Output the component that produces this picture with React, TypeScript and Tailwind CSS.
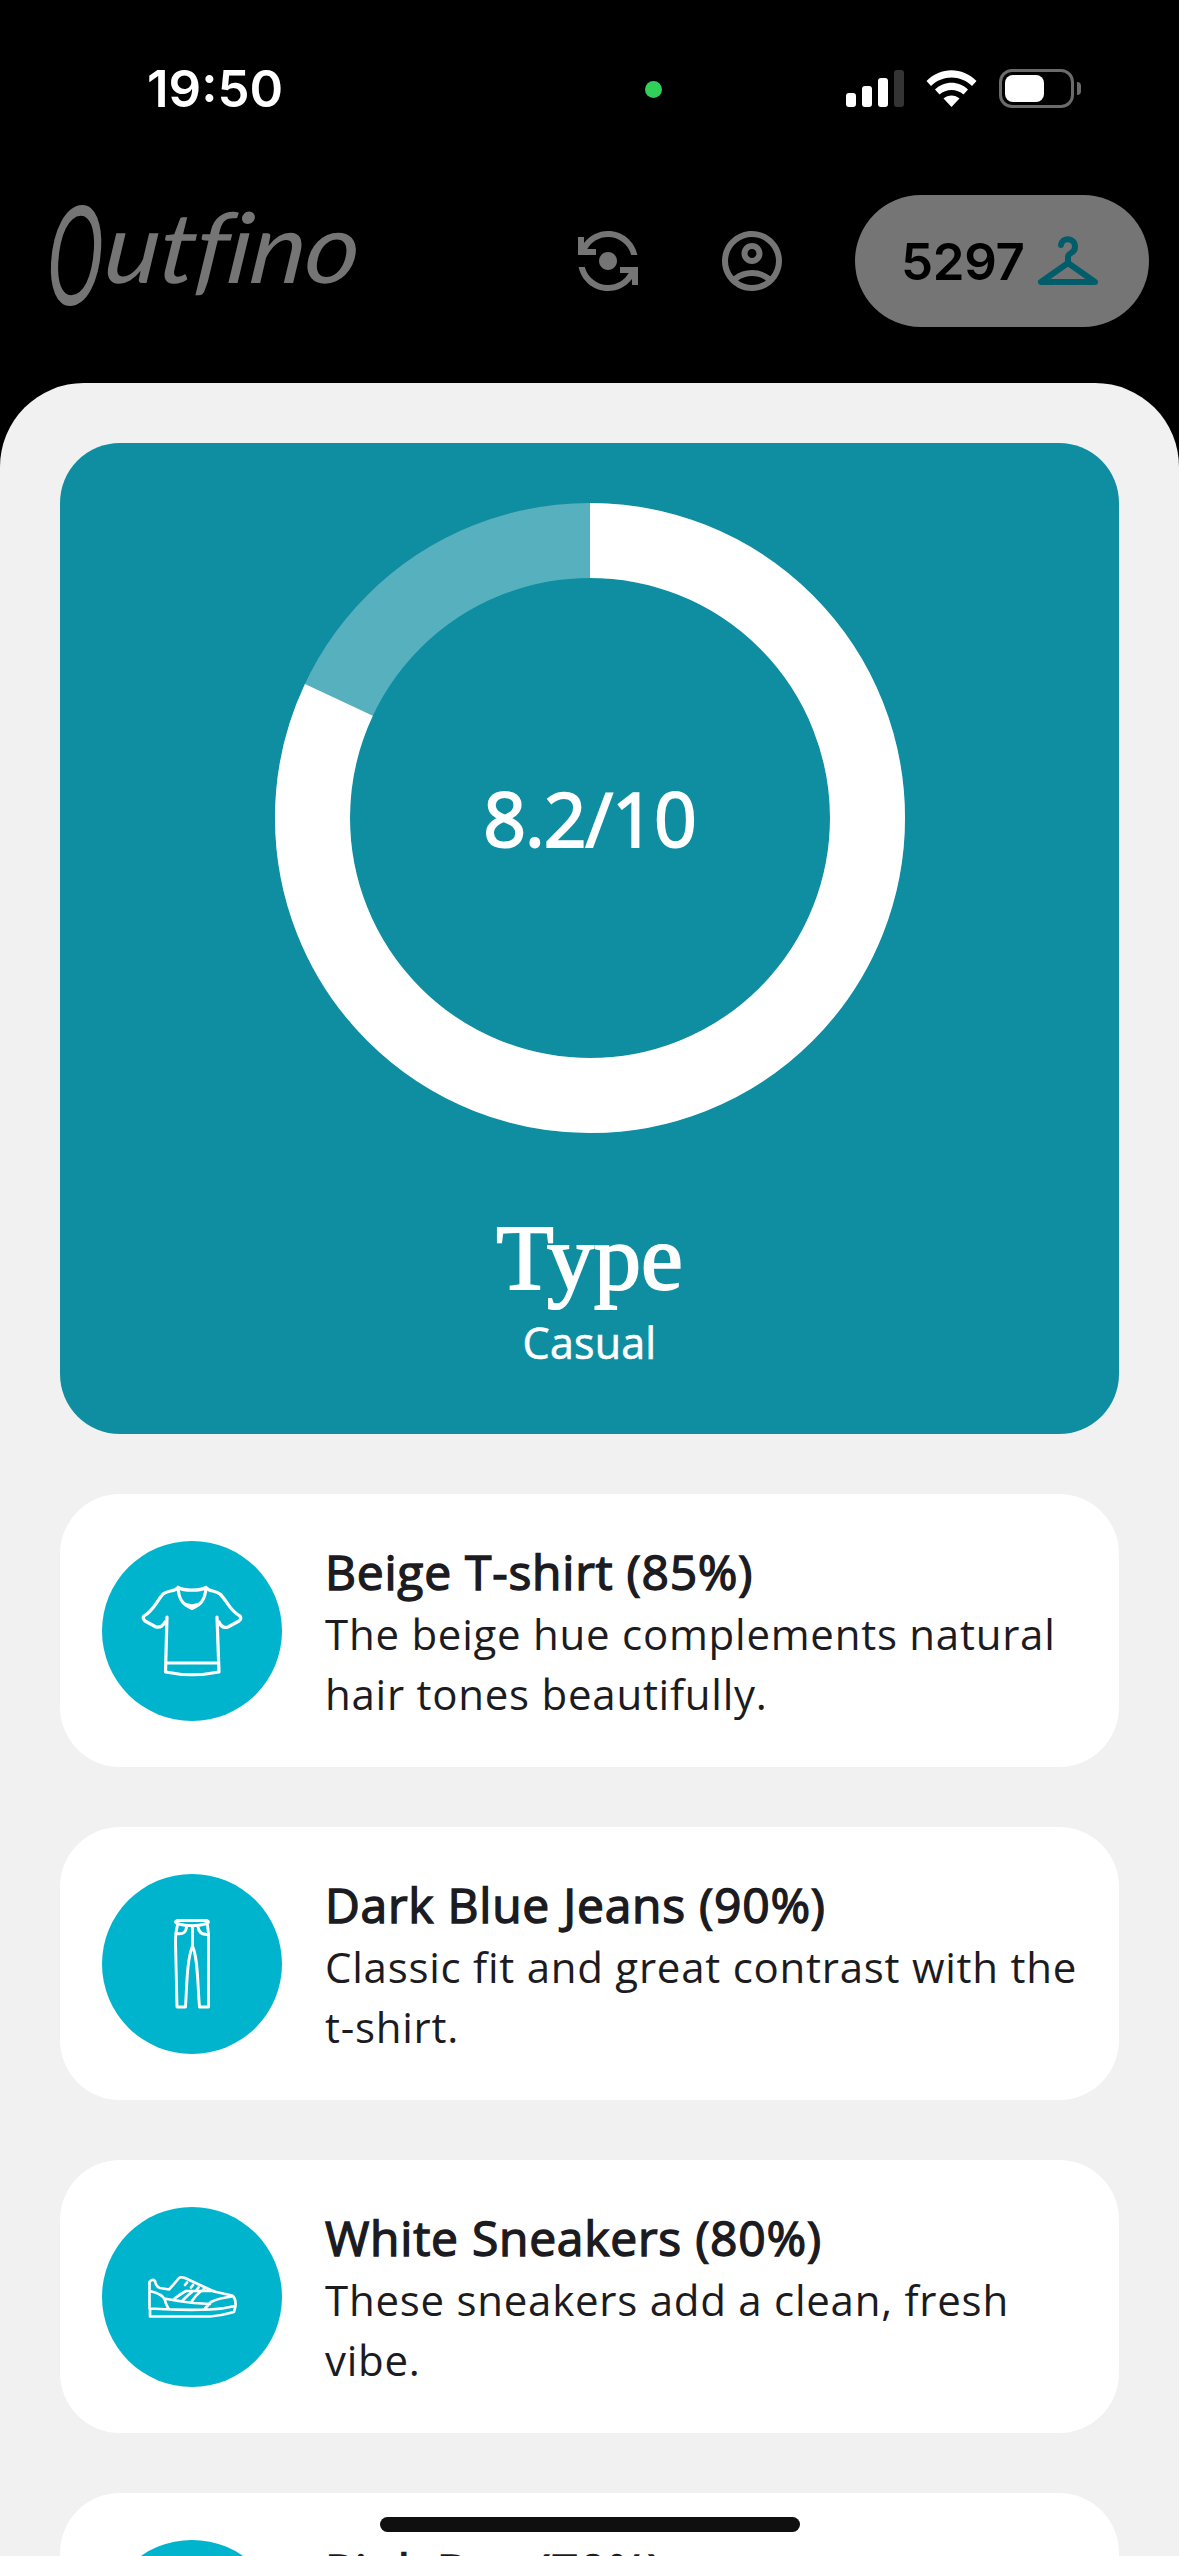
import React from "react";
import { MdFlipCameraAndroid, MdOutlineAccountCircle } from "react-icons/md";

type Item = { title: string; text: string; icon: React.ReactNode };

const line = {
  fill: "none",
  stroke: "currentColor",
  strokeLinecap: "round" as const,
  strokeLinejoin: "round" as const,
};

const Shirt = () => (
  <svg viewBox="0 0 180 180" className="size-full" {...line} strokeWidth={3.2}>
    <path d="M76 46.500C82 50 98 50 104 46.500C107 51 113 49 118 53C126 61 128 70 138 75Q140 78 137 80L126 86Q120 88 117 81M76 46.500C73 51 66 49 61 53C54 61 52 69 42 75Q40 77 43 80L54 86Q60 87 63 81" />
    <path d="M76 47C77 60 82 64 90 67.500C98 64 103 60 104 47M84 63.500Q90 66 96 63.500" />
    <path d="M65 76L63.500 131Q90 136.500 117 131L115 76M64 122H116.500" />
  </svg>
);

const Jeans = () => (
  <svg viewBox="0 0 180 180" className="size-full" {...line} strokeWidth={2.9}>
    <path d="M75 46.500H105Q108 48 105 49.500Q90 54 75 49.500Q72 48 75 46.500ZM75.500 51Q73 60 73.500 68L75 133H83.500C85 108 85 86 90.500 72C96 84 95.500 110 97.500 133H106.500L106.500 68Q107 60 105.500 51M90.500 53V72M84.500 53Q84 61 75 59.500M96 53Q97 61 106 60.500" />
  </svg>
);

const Sneaker = () => (
  <svg viewBox="0 0 180 180" className="size-full" {...line} strokeWidth={2.7}>
    <path d="M47.500 101.500V75Q50 71.500 53 74Q54 80 58 81L67 82.500Q73 76 77 71Q79 69.500 83 71L112 84.500L130 88.500Q134 91 133.500 99L132 105Q120 108.500 108 109.500H48V101.500Q80 103.500 108 102.500Q121 102 133 99M48 84Q60 87 62.500 92Q64 98 66.500 101.500M62.500 91.500Q75 94 92 96L108 97M72 92Q80 86 84 84H112M81 93Q86 88 90 85M90 94Q94 88 98 85M103 101.500L109 95Q117 91 130 89.500M83 78L85 75.500M89 80.500L91 78M94.500 83L96.500 80.500M100 84L102 82" />
  </svg>
);

const items: Item[] = [
  { title: "Beige T-shirt (85%)", text: "The beige hue complements natural hair tones beautifully.", icon: <Shirt /> },
  { title: "Dark Blue Jeans (90%)", text: "Classic fit and great contrast with the t-shirt.", icon: <Jeans /> },
  { title: "White Sneakers (80%)", text: "These sneakers add a clean, fresh vibe.", icon: <Sneaker /> },
  { title: "Pink Bag (70%)", text: "", icon: null },
];

function StatusBar() {
  return (
    <div className="flex h-[176px] items-center pl-[147px] pr-[98px] text-white">
      <div className="w-[498px] text-[51px] font-semibold leading-none">19:50</div>
      <div className="mt-[2px] size-[17px] rounded-full bg-[#30d158]" />
      <div className="ml-auto flex items-center">
        <div className="flex h-[37px] items-end gap-[6px]">
          <div className="h-[14px] w-[10px] rounded-[3px] bg-white" />
          <div className="h-[21px] w-[10px] rounded-[3px] bg-white" />
          <div className="h-[29px] w-[10px] rounded-[3px] bg-white" />
          <div className="h-[37px] w-[10px] rounded-[3px] bg-[#343434]" />
        </div>
        <svg className="ml-[22px] h-[37px] w-[51px]" viewBox="0 0 51 37" fill="white">
          <path d="M0.500 11C14.500-3.500 36.500-3.500 50.500 11L46 16C34.500 4.500 16.500 4.500 5 16Z" />
          <path d="M9 19.500C18 10.500 33 10.500 42 19.500L37.500 24.500C31 18.500 20 18.500 13.500 24.500Z" />
          <path d="M17.500 28.500C22 24.500 29 24.500 33.500 28.500L25.500 37Z" />
        </svg>
        <div className="ml-[22px] flex h-[39px] w-[75px] items-center rounded-[13px] border-[3px] border-[#6b6b6b] pl-[3px]">
          <div className="h-[27px] w-[39px] rounded-[8px] bg-white" />
        </div>
        <div className="ml-[3px] h-[13px] w-[4px] rounded-r-full bg-[#6b6b6b]" />
      </div>
    </div>
  );
}

function Logo() {
  return (
    <div className="flex h-[132px] w-[524px] items-start leading-none">
      <span className="mt-[-4px] w-[58px] origin-left scale-x-[0.54] -skew-x-6 font-['Lato'] text-[138px] italic leading-[122px]">O</span>
      <span className="mt-[1px] origin-left scale-x-[1.07] -skew-x-6 font-['Lato'] text-[98px] italic leading-[98px] tracking-[-1px]">utfino</span>
    </div>
  );
}

function Header() {
  return (
    <div className="flex h-[207px] items-start pl-[48px] pr-[30px] pt-[19px] text-[#757575]">
      <Logo />
      <div className="flex h-[132px] items-center gap-[72px]">
        <MdFlipCameraAndroid className="size-[72px]" />
        <MdOutlineAccountCircle className="size-[72px]" />
      </div>
      <div className="ml-auto flex h-[132px] w-[294px] items-center rounded-full bg-[#757575] pl-[46px]">
        <span className="w-[136px] text-[51px] font-semibold leading-none tracking-[-0.3px] text-black">5297</span>
        <svg className="h-[50px] w-[62px]" viewBox="0 0 62 50" fill="none" stroke="#005d69" strokeWidth="6" strokeLinecap="round" strokeLinejoin="round">
          <path d="M24 9C25 1 38 1 38 11C38 18 31 16 31 21V27M31 27L4 46H58Z" />
        </svg>
      </div>
    </div>
  );
}

function ScoreCard() {
  return (
    <section className="flex h-[991px] shrink-0 flex-col items-center rounded-[60px] bg-[#0f8ea2] pt-[60px] text-white">
      <div className="grid size-[630px] place-items-center">
        <svg viewBox="0 0 630 630" className="col-start-1 row-start-1 size-full -rotate-90" fill="none" strokeWidth="75">
          <circle cx="315" cy="315" r="277.500" stroke="#57b0be" />
          <circle cx="315" cy="315" r="277.500" stroke="white" pathLength="100" strokeDasharray="82 18" />
        </svg>
        <span className="col-start-1 row-start-1 text-[75px] leading-none tracking-[-1px] [-webkit-text-stroke:2px_white]">8.2/10</span>
      </div>
      <h1 className="mt-[70px] font-['Liberation_Serif'] text-[94px] leading-[108px] [-webkit-text-stroke:2px_white]">Type</h1>
      <p className="mt-[2px] text-[43px] leading-[60px] tracking-[0.2px] [-webkit-text-stroke:0.6px_white]">Casual</p>
    </section>
  );
}

function ItemCard({ title, text, icon }: Item) {
  return (
    <article className="flex h-[273px] shrink-0 items-center rounded-[60px] bg-white pl-[42px] text-[#1c1b1f]">
      <div className="size-[180px] shrink-0 rounded-full bg-[#00b4cd] text-white">{icon}</div>
      <div className="ml-[43px] mt-[-4px] h-[180px] w-[765px]">
        <h2 className="text-[48px] leading-[65px] tracking-[0.75px] [-webkit-text-stroke:1.4px_#1c1b1f]">{title}</h2>
        <p className="text-[42px] leading-[60px] tracking-[0.75px]">{text}</p>
      </div>
    </article>
  );
}

export default function App() {
  return (
    <div className="relative h-[2556px] w-[1179px] overflow-hidden bg-black font-['Inter']">
      <StatusBar />
      <Header />
      <main className="flex h-[2173px] flex-col gap-[60px] overflow-hidden rounded-t-[84px] bg-[#f1f1f1] px-[60px] pt-[60px] font-['Open_Sans']">
        <ScoreCard />
        {items.map((item) => (
          <ItemCard key={item.title} {...item} />
        ))}
      </main>
      <div className="absolute bottom-[24px] left-[380px] h-[15px] w-[420px] rounded-full bg-[#0f0f0f]" />
    </div>
  );
}
